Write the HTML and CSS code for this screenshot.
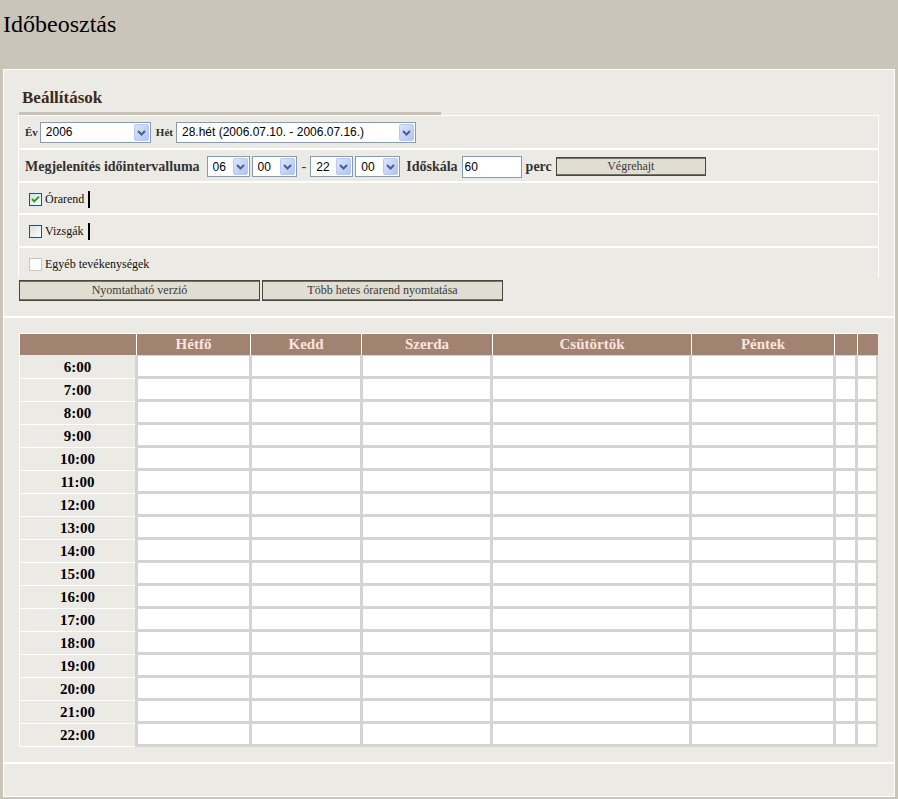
FILE: index.html
```html
<!DOCTYPE html>
<html lang="hu">
<head>
<meta charset="utf-8">
<title>Időbeosztás</title>
<link rel="stylesheet" href="styles.css">
</head>
<body>
<header class="top"><h1 class="title">Időbeosztás</h1></header>
<main class="panel">
  <section class="settings">
    <h2 class="heading">Beállítások</h2>
    <div class="rule"></div>
    <div class="opts">
      <div class="opt r1">
        <b class="lb lb-s">Év</b>
        <span class="sel w-ev"><select><option>2006</option></select><svg class="arr" width="15" height="17" viewBox="0 0 15 17"><defs><linearGradient id="g1" x1="0" y1="0" x2="1" y2="1"><stop offset="0" stop-color="#DDE7FD"/><stop offset="1" stop-color="#ADC3F5"/></linearGradient></defs><rect x="0.5" y="0.5" width="14" height="16" rx="1.5" fill="url(#g1)" stroke="#B8CAF2"/><path d="M4 7 L7.5 10.5 L11 7" fill="none" stroke="#4D6185" stroke-width="2"/></svg></span>
        <b class="lb lb-s lb-het">Hét</b>
        <span class="sel w-het"><select><option>28.hét (2006.07.10. - 2006.07.16.)</option></select><svg class="arr" width="15" height="17" viewBox="0 0 15 17"><defs><linearGradient id="g2" x1="0" y1="0" x2="1" y2="1"><stop offset="0" stop-color="#DDE7FD"/><stop offset="1" stop-color="#ADC3F5"/></linearGradient></defs><rect x="0.5" y="0.5" width="14" height="16" rx="1.5" fill="url(#g2)" stroke="#B8CAF2"/><path d="M4 7 L7.5 10.5 L11 7" fill="none" stroke="#4D6185" stroke-width="2"/></svg></span>
      </div>
      <div class="opt r2">
        <b class="lb lb-m">Megjelenítés időintervalluma</b>
        <span class="sel w-h s-first"><select><option>06</option></select><svg class="arr" width="15" height="17" viewBox="0 0 15 17"><defs><linearGradient id="g3" x1="0" y1="0" x2="1" y2="1"><stop offset="0" stop-color="#DDE7FD"/><stop offset="1" stop-color="#ADC3F5"/></linearGradient></defs><rect x="0.5" y="0.5" width="14" height="16" rx="1.5" fill="url(#g3)" stroke="#B8CAF2"/><path d="M4 7 L7.5 10.5 L11 7" fill="none" stroke="#4D6185" stroke-width="2"/></svg></span>
        <span class="sel w-m s-next"><select><option>00</option></select><svg class="arr" width="15" height="17" viewBox="0 0 15 17"><defs><linearGradient id="g4" x1="0" y1="0" x2="1" y2="1"><stop offset="0" stop-color="#DDE7FD"/><stop offset="1" stop-color="#ADC3F5"/></linearGradient></defs><rect x="0.5" y="0.5" width="14" height="16" rx="1.5" fill="url(#g4)" stroke="#B8CAF2"/><path d="M4 7 L7.5 10.5 L11 7" fill="none" stroke="#4D6185" stroke-width="2"/></svg></span>
        <span class="dash">-</span>
        <span class="sel w-h"><select><option>22</option></select><svg class="arr" width="15" height="17" viewBox="0 0 15 17"><defs><linearGradient id="g5" x1="0" y1="0" x2="1" y2="1"><stop offset="0" stop-color="#DDE7FD"/><stop offset="1" stop-color="#ADC3F5"/></linearGradient></defs><rect x="0.5" y="0.5" width="14" height="16" rx="1.5" fill="url(#g5)" stroke="#B8CAF2"/><path d="M4 7 L7.5 10.5 L11 7" fill="none" stroke="#4D6185" stroke-width="2"/></svg></span>
        <span class="sel w-m s-next"><select><option>00</option></select><svg class="arr" width="15" height="17" viewBox="0 0 15 17"><defs><linearGradient id="g6" x1="0" y1="0" x2="1" y2="1"><stop offset="0" stop-color="#DDE7FD"/><stop offset="1" stop-color="#ADC3F5"/></linearGradient></defs><rect x="0.5" y="0.5" width="14" height="16" rx="1.5" fill="url(#g6)" stroke="#B8CAF2"/><path d="M4 7 L7.5 10.5 L11 7" fill="none" stroke="#4D6185" stroke-width="2"/></svg></span>
        <b class="lb lb-m lb-scale">Időskála</b>
        <input class="num" type="text" value="60">
        <b class="lb lb-m lb-perc">perc</b>
        <button class="btn go" type="button">Végrehajt</button>
      </div>
      <div class="opt r3">
        <svg class="chk" width="13" height="13" viewBox="0 0 13 13"><defs><linearGradient id="c1" x1="0" y1="0" x2="1" y2="1"><stop offset="0" stop-color="#DCDCD6"/><stop offset="1" stop-color="#FFFFFF"/></linearGradient></defs><rect x="0.5" y="0.5" width="12" height="12" fill="url(#c1)" stroke="#1C5180"/><path d="M3 6 L5.2 8.4 L10 3.6" fill="none" stroke="#21A121" stroke-width="2"/></svg>
        <span class="ck-text">Órarend</span><span class="bar"></span>
      </div>
      <div class="opt r4">
        <svg class="chk" width="13" height="13" viewBox="0 0 13 13"><defs><linearGradient id="c2" x1="0" y1="0" x2="1" y2="1"><stop offset="0" stop-color="#DCDCD6"/><stop offset="1" stop-color="#FFFFFF"/></linearGradient></defs><rect x="0.5" y="0.5" width="12" height="12" fill="url(#c2)" stroke="#1C5180"/></svg>
        <span class="ck-text">Vizsgák</span><span class="bar"></span>
      </div>
      <div class="opt r5">
        <svg class="chk" width="13" height="13" viewBox="0 0 13 13"><rect x="0.5" y="0.5" width="12" height="12" fill="#FFFFFF" stroke="#CAC8BB"/></svg>
        <span class="ck-text">Egyéb tevékenységek</span>
      </div>
    </div>
    <div class="btns">
      <button class="btn wide" type="button">Nyomtatható verzió</button>
      <button class="btn wide" type="button">Több hetes órarend nyomtatása</button>
    </div>
  </section>

  <section class="tt-sec">
    <div class="tt">
      <div class="tt-head">
        <div></div><div>Hétfő</div><div>Kedd</div><div>Szerda</div><div>Csütörtök</div><div>Péntek</div><div></div><div></div>
      </div>
      <div class="tt-body">
        <div class="times">
          <div>6:00</div><div>7:00</div><div>8:00</div><div>9:00</div><div>10:00</div><div>11:00</div><div>12:00</div><div>13:00</div><div>14:00</div><div>15:00</div><div>16:00</div><div>17:00</div><div>18:00</div><div>19:00</div><div>20:00</div><div>21:00</div><div>22:00</div>
        </div>
        <div class="days">
          <div></div><div></div><div></div><div></div><div></div><div></div><div></div>
          <div></div><div></div><div></div><div></div><div></div><div></div><div></div>
          <div></div><div></div><div></div><div></div><div></div><div></div><div></div>
          <div></div><div></div><div></div><div></div><div></div><div></div><div></div>
          <div></div><div></div><div></div><div></div><div></div><div></div><div></div>
          <div></div><div></div><div></div><div></div><div></div><div></div><div></div>
          <div></div><div></div><div></div><div></div><div></div><div></div><div></div>
          <div></div><div></div><div></div><div></div><div></div><div></div><div></div>
          <div></div><div></div><div></div><div></div><div></div><div></div><div></div>
          <div></div><div></div><div></div><div></div><div></div><div></div><div></div>
          <div></div><div></div><div></div><div></div><div></div><div></div><div></div>
          <div></div><div></div><div></div><div></div><div></div><div></div><div></div>
          <div></div><div></div><div></div><div></div><div></div><div></div><div></div>
          <div></div><div></div><div></div><div></div><div></div><div></div><div></div>
          <div></div><div></div><div></div><div></div><div></div><div></div><div></div>
          <div></div><div></div><div></div><div></div><div></div><div></div><div></div>
          <div></div><div></div><div></div><div></div><div></div><div></div><div></div>
        </div>
      </div>
    </div>
  </section>

  <section class="foot"></section>
</main>
</body>
</html>
```

FILE: styles.css
```css
* { box-sizing: border-box; }
html, body { margin: 0; padding: 0; }
body {
  background: #CBC4B8;
  font-family: "Liberation Serif", "Times New Roman", serif;
  width: 898px;
  height: 799px;
  overflow: hidden;
}

.top { height: 69px; padding: 10px 0 0 3px; }
.title { margin: 0; font-size: 24px; line-height: 28px; font-weight: normal; color: #000; }

.panel {
  margin: 0 3px 2px;
  border: 1px solid #fff;
  background: #ECEAE5;
}

/* settings */
.settings { height: 248px; border-bottom: 2px solid #fff; }
.heading {
  margin: 0;
  padding: 18px 0 4px 18px;
  font-size: 17px;
  line-height: 20px;
  font-weight: bold;
  color: #3E2A1B;
}
.rule { margin-left: 15px; width: 422px; height: 3px; background: #C9C1B3; }

.opts {
  margin-left: 14px;
  width: 861px;
  background: #fff;
  padding: 1px 1px 0;
  display: flex;
  flex-direction: column;
  gap: 2px;
}
.opt { background: #ECEAE5; display: flex; align-items: center; }
.r1 { height: 32px; padding-left: 6px; }
.r2 { height: 31px; padding-left: 6px; padding-top: 2px; }
.r3 { height: 30px; padding-left: 10px; padding-top: 2px; }
.r4 { height: 31px; padding-left: 10px; padding-top: 2px; }
.r5 { height: 30px; padding-left: 10px; padding-top: 2px; }

.lb { font-weight: bold; color: #2E2E2E; }
.lb-s { font-size: 11px; margin-right: 2px; }
.lb-het { margin-left: 5px; margin-right: 3px; }
.lb-m { font-size: 14px; color: #333; }
.lb-scale { margin-left: 6px; margin-right: 4px; }
.lb-perc { margin-left: 4px; margin-right: 4px; }

.sel {
  display: inline-flex;
  align-items: center;
  height: 21px;
  border: 1px solid #7F9DB9;
  background: #fff;
  flex: none;
}
.sel select {
  appearance: none;
  -webkit-appearance: none;
  border: 0;
  background: transparent;
  font: 12px "Liberation Sans", Arial, sans-serif;
  color: #000;
  padding: 0 0 0 5px;
  margin: 0;
  flex: 1;
  min-width: 0;
  height: 19px;
  outline: none;
}
.sel .arr { flex: none; margin-right: 1px; display: block; }
.w-ev { width: 111px; }
.w-het { width: 240px; }
.w-h { width: 43px; }
.w-m { width: 45px; }
.s-first { margin-left: 7px; }
.s-next { margin-left: 2px; }
.dash { font: 14px "Liberation Serif", serif; color: #333; margin: 0 4px 0 5px; }

.num {
  width: 60px;
  height: 22px;
  border: 1px solid #7F9DB9;
  font: 12px "Liberation Sans", Arial, sans-serif;
  padding: 0 2px;
  margin: 0;
  background: #fff;
  color: #000;
}

.btn {
  font: 12px "Liberation Serif", "Times New Roman", serif;
  color: #3A3A3A;
  background: #E0DDD2;
  border: 1px solid #4A463C;
  box-shadow: inset 0 1px 0 #77736A, inset 0 -1px 0 #77736A;
  padding: 0;
  margin: 0;
  text-align: center;
}
.go { width: 150px; height: 19px; }
.wide { width: 241px; height: 21px; }

.chk { display: block; flex: none; margin-right: 3px; }
.ck-text { font-size: 12px; color: #111; }
.bar { width: 2px; height: 17px; background: #000; margin-left: 4px; }

.btns { margin: 2px 0 0 15px; display: flex; gap: 2px; }

/* timetable */
.tt-sec { height: 446px; padding-top: 15px; border-bottom: 2px solid #fff; }
.tt { margin-left: 15px; width: 859px; }
.tt-head {
  display: grid;
  grid-template-columns: 116px 113px 110px 130px 198px 142px 22px 20px;
  column-gap: 1px;
  background: #fff;
  padding: 1px 0 0 1px;
}
.tt-head > div {
  background: #A28270;
  height: 21px;
  line-height: 21px;
  text-align: center;
  font-weight: bold;
  font-size: 15px;
  color: #FBE4DF;
}
.tt-body { display: flex; }
.times { width: 116px; padding-top: 1px; border-left: 1px solid #fff; }
.times > div {
  height: 23px;
  border-bottom: 1px solid #fff;
  line-height: 22px;
  text-align: center;
  font-weight: bold;
  font-size: 15px;
  color: #000;
}
.days {
  width: 743px;
  background: #D4D4D4;
  padding: 1px 2px 3px 3px;
  display: grid;
  grid-template-columns: 111px 108px 127px 196px 141px 19px 18px;
  grid-auto-rows: 20px;
  gap: 3px;
}
.days > div { background: #fff; }

.foot { height: 32px; }
```
